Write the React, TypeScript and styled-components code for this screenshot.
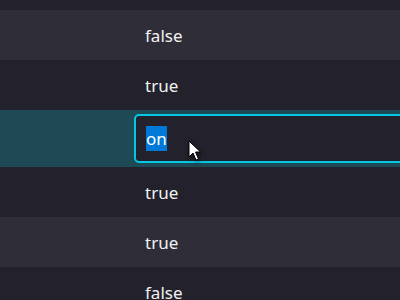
import styled, { createGlobalStyle } from "styled-components";

const GlobalStyle = createGlobalStyle`
  html, body {
    margin: 0;
    padding: 0;
    background: #23212b;
    overflow: hidden;
  }
  body {
    font-family: "Noto Sans", "Open Sans", sans-serif;
  }
`;

const Viewport = styled.div`
  position: relative;
  width: 400px;
  height: 300px;
  overflow: hidden;
`;

const List = styled.div`
  display: flex;
  flex-direction: column;
  margin-top: -40px;
`;

const Row = styled.div<{ $striped?: boolean; $editing?: boolean }>`
  display: grid;
  grid-template-columns: 134px 1fr;
  height: ${(p) => (p.$editing ? "57px" : "50px")};
  background: ${(p) =>
    p.$editing ? "#1e4a55" : p.$striped ? "#2f2d37" : "#23212b"};
`;

const Value = styled.div`
  display: flex;
  align-items: center;
  padding-left: 11px;
  color: #f2f2f2;
  font-size: 17px;
`;

const EditCell = styled.div`
  display: flex;
  padding: 4px 0;
`;

const Editor = styled.div`
  flex: 1;
  display: flex;
  align-items: center;
  margin-right: -20px;
  padding-left: 10px;
  border: 2px solid #00c8e6;
  border-radius: 5px;
  background: #23212b;
  color: #f2f2f2;
  font-size: 17px;
`;

const Selected = styled.span`
  display: inline-block;
  line-height: 25px;
  background: #0078d7;
  color: #ffffff;
`;

const Pointer = styled.svg`
  position: absolute;
  left: 188px;
  top: 140px;
  filter: drop-shadow(1px 2px 2px rgba(0, 0, 0, 0.5));
`;

const rows: { value: string; editing?: boolean }[] = [
  { value: "true" },
  { value: "false" },
  { value: "true" },
  { value: "on", editing: true },
  { value: "true" },
  { value: "true" },
  { value: "false" },
];

export default function App() {
  return (
    <Viewport>
      <GlobalStyle />
      <List>
        {rows.map((r, i) =>
          r.editing ? (
            <Row key={i} $editing>
              <div />
              <EditCell>
                <Editor>
                  <Selected>{r.value}</Selected>
                </Editor>
              </EditCell>
            </Row>
          ) : (
            <Row key={i} $striped={i % 2 === 1}>
              <div />
              <Value>{r.value}</Value>
            </Row>
          )
        )}
      </List>
      <Pointer width="14" height="22" viewBox="0 0 14 22">
        <path
          d="M1 1 L1 17 L5 13 L8 20 L10.5 19 L7.5 12 L12.5 12 Z"
          fill="#ffffff"
          stroke="#000000"
          strokeWidth="1"
          strokeLinejoin="round"
        />
      </Pointer>
    </Viewport>
  );
}
